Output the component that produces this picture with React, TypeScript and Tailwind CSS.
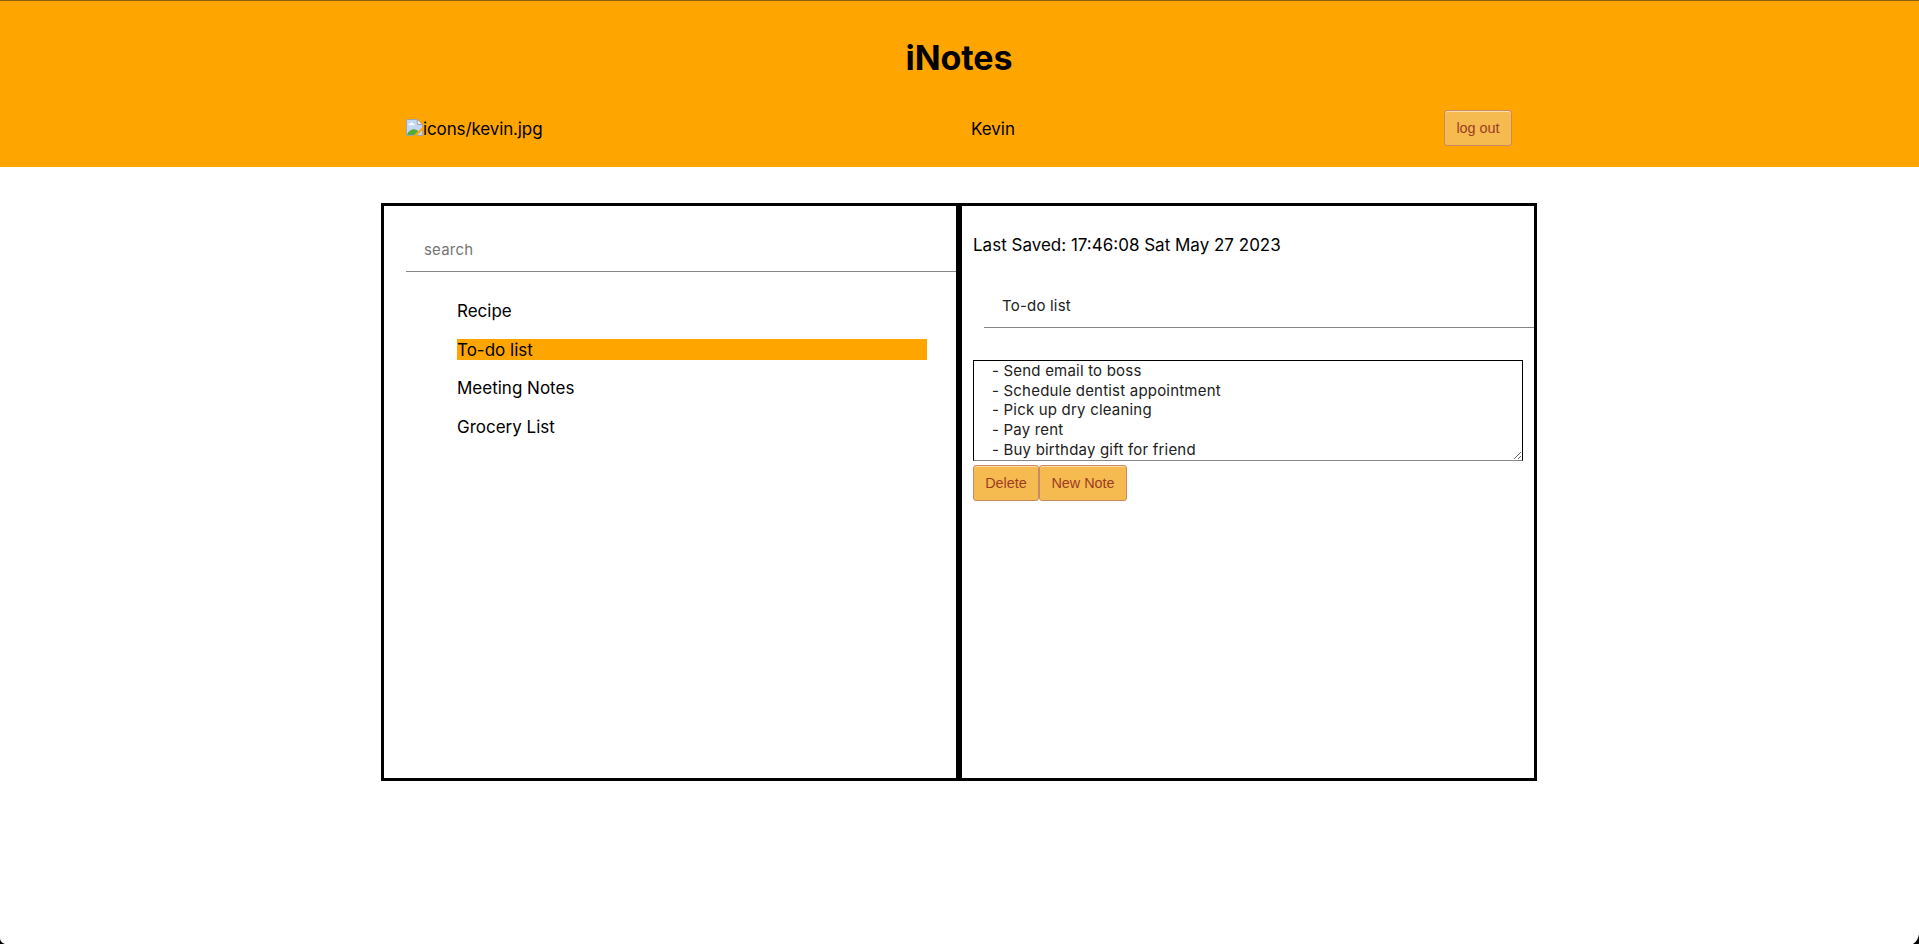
import { useState } from "react";

const notes = ["Recipe", "To-do list", "Meeting Notes", "Grocery List"];

const body = [
  "- Send email to boss",
  "- Schedule dentist appointment",
  "- Pick up dry cleaning",
  "- Pay rent",
  "- Buy birthday gift for friend",
].join("\n");

const buttonClass =
  "flex h-9 items-center justify-center rounded-[3px] border border-[#c98a63] bg-[#f5bb51] font-['Liberation_Sans',sans-serif] text-[14.400px] text-[#9c3d22] shadow-[inset_0_1px_0_0_#fbdca5]";

function BrokenImage() {
  return (
    <svg width="17" height="17" viewBox="0 0 17 17" className="-mt-1 shrink-0">
      <path d="M.5.5h10.800l5.200 5v11H.5z" fill="#c3d6f3" stroke="#a3a5a5" />
      <path d="M11.300.5v5h5.200z" fill="#f4f4f4" stroke="#a3a5a5" />
      <path d="M2.500 6.300c0-1.300 1-1.600 1.500-1.600C4.500 3 6.700 3 7.200 4.400c1.200 0 1.600 1 1.400 1.900z" fill="#fff" />
      <path d="M1 16c1-3.500 4-5.700 7-5.700 2 0 3.300 1 4.200 2L8.500 16z" fill="#54ab3c" />
      <path d="M17 7.500v3L10.500 17H7.500z" fill="#ffa500" />
      <path d="M11 16.500h5.500V12" fill="#c3d6f3" stroke="#a3a5a5" />
    </svg>
  );
}

export default function App() {
  const [selected, setSelected] = useState("To-do list");
  return (
    <div className="relative h-[944px] w-full overflow-hidden bg-white font-[Inter,sans-serif] text-[17px] leading-[21px] text-black">
      <header className="h-[167px] border-t border-[#8c5c12] bg-[#ffa500] pr-px">
        <h1 className="pt-[36px] text-center text-[34px] leading-[42px] font-bold tracking-[-0.1px]">iNotes</h1>
        <div className="mx-auto mt-[31px] flex h-9 w-[1106px] items-center justify-between">
          <div className="flex w-[136px] items-center pt-[2px]">
            <BrokenImage />
            <span className="tracking-[-0.12px]">icons/kevin.jpg</span>
          </div>
          <span className="pt-[2px]">Kevin</span>
          <button className={buttonClass + " w-[68px]"}>log out</button>
        </div>
      </header>

      <div className="pt-9 pr-px">
        <main className="mx-auto flex h-[578px] w-[1156px]">
          <section className="w-1/2 overflow-hidden border-3 border-black">
            <input
              placeholder="search"
              className="mt-[21px] ml-[22px] block h-[45px] w-full border-b border-[#868686] px-[18px] text-[15px] tracking-[0.2px] outline-none placeholder:text-[#757575]"
            />
            <ul className="mt-[28px] mr-[29px] ml-[73px] flex flex-col gap-[17.700px]">
              {notes.map((note) => (
                <li
                  key={note}
                  onClick={() => setSelected(note)}
                  className={note === selected ? "h-[21px] bg-[#ffa500] leading-[23px]" : "h-[21px] leading-[23px]"}
                >
                  {note}
                </li>
              ))}
            </ul>
          </section>

          <section className="w-1/2 overflow-hidden border-3 border-black">
            <p className="mt-[29px] ml-[11px]">Last Saved: 17:46:08 Sat May 27 2023</p>
            <input
              defaultValue="To-do list"
              className="mt-[27px] ml-[22px] block h-[45px] w-full border-b border-[#868686] px-[18px] text-[15px] tracking-[0.2px] text-[#212121] outline-none"
            />
            <textarea
              defaultValue={body}
              className="mt-[32px] ml-[11px] block h-[101px] w-[550px] resize overflow-hidden border border-black border-b-[#868686] px-[18px] text-[15px] leading-[19.700px] tracking-[0.2px] text-[#212121] outline-none"
            />
            <div className="mt-[4px] ml-[11px] flex">
              <button className={buttonClass + " w-[66px]"}>Delete</button>
              <button className={buttonClass + " w-[88px]"}>New Note</button>
            </div>
          </section>
        </main>
      </div>

      <svg width="5" height="5" viewBox="0 0 5 5" className="absolute bottom-0 left-0">
        <path d="M0 0Q1 4 5 5H0z" />
      </svg>
      <svg width="6" height="10" viewBox="0 0 6 10" className="absolute right-0 bottom-0">
        <path d="M6 0Q5 7 0 10H6z" />
      </svg>
    </div>
  );
}
